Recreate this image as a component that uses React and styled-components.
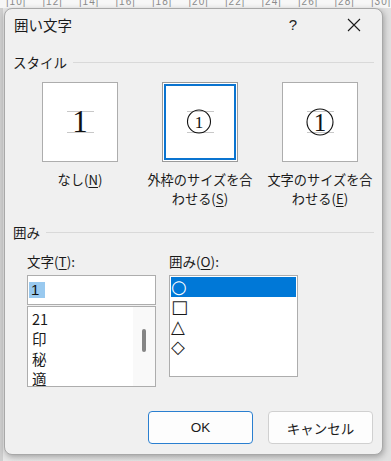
import React from 'react';
import styled, { createGlobalStyle } from 'styled-components';

const GlobalStyle = createGlobalStyle`
  html, body {
    margin: 0;
    padding: 0;
    background: #d4d4d4;
    font-family: "Noto Sans CJK JP", "Noto Sans", sans-serif;
  }
`;

const rulerMarks = ['10', '12', '14', '16', '18', '20', '22', '24', '26', '28', '30'];
const styleOptions = [
  { key: 'none', label: 'なし(', acc: 'N', tail: ')' },
  { key: 'shrink', label: '外枠のサイズを合わせる(', acc: 'S', tail: ')' },
  { key: 'enlarge', label: '文字のサイズを合わせる(', acc: 'E', tail: ')' },
];
const chars = ['21', '印', '秘', '適'];
const shapes = ['\u25CB', '\u25A1', '\u25B3', '\u25C7'];

const StylePreview = ({ variant }) => (
  <svg width="74" height="78" viewBox="0 0 74 78">
    <line x1="24" y1="28.5" x2="51" y2="28.5" stroke="#c8c8c8" strokeWidth="1" />
    <line x1="24" y1="49.5" x2="51" y2="49.5" stroke="#c8c8c8" strokeWidth="1" />
    {variant === 'none' && (
      <text x="37" y="49" textAnchor="middle" fontFamily="Liberation Serif, serif" fontSize="31" fill="#111">1</text>
    )}
    {variant === 'shrink' && (
      <>
        <circle cx="36" cy="38.5" r="11.5" fill="none" stroke="#111" strokeWidth="1.1" />
        <text x="36" y="44.5" textAnchor="middle" fontFamily="Liberation Serif, serif" fontSize="17" fill="#111">1</text>
      </>
    )}
    {variant === 'enlarge' && (
      <>
        <circle cx="37" cy="39" r="13" fill="none" stroke="#111" strokeWidth="1.1" />
        <text x="37" y="48" textAnchor="middle" fontFamily="Liberation Serif, serif" fontSize="25" fill="#111">1</text>
      </>
    )}
  </svg>
);

const CloseIcon = () => (
  <svg width="14" height="14" viewBox="0 0 14 14">
    <path d="M1 1 L13 13 M13 1 L1 13" stroke="#1a1a1a" strokeWidth="1.1" fill="none" />
  </svg>
);

export default function App() {
  return (
    <Page>
      <GlobalStyle />
      <Ruler>
        {rulerMarks.map((m) => (
          <RulerMark key={m}>|{m}|</RulerMark>
        ))}
      </Ruler>
      <Dialog>
        <TitleBar>
          <Title>囲い文字</Title>
          <HelpButton>?</HelpButton>
          <CloseButton>
            <CloseIcon />
          </CloseButton>
        </TitleBar>
        <Body>
          <GroupHeader>
            <span>スタイル</span>
          </GroupHeader>
          <StyleRow>
            {styleOptions.map((o) => (
              <StyleColumn key={o.key}>
                <PreviewBox selected={o.key === 'shrink'}>
                  <StylePreview variant={o.key} />
                </PreviewBox>
                <StyleLabel>
                  {o.label}
                  <u>{o.acc}</u>
                  {o.tail}
                </StyleLabel>
              </StyleColumn>
            ))}
          </StyleRow>
          <GroupHeader spaced>
            <span>囲み</span>
          </GroupHeader>
          <EncloseRow>
            <Field>
              <FieldLabel>
                文字(<u>T</u>):
              </FieldLabel>
              <TextInput>
                <Selected>1</Selected>
              </TextInput>
              <CharList>
                <CharItems>
                  {chars.map((c) => (
                    <ListRow key={c}>{c}</ListRow>
                  ))}
                </CharItems>
                <ScrollTrack>
                  <ScrollThumb />
                </ScrollTrack>
              </CharList>
            </Field>
            <Field>
              <FieldLabel>
                囲み(<u>O</u>):
              </FieldLabel>
              <ShapeList>
                {shapes.map((s, i) => (
                  <ShapeRow key={s} active={i === 0}>
                    {s}
                  </ShapeRow>
                ))}
              </ShapeList>
            </Field>
          </EncloseRow>
          <Footer>
            <Button primary>OK</Button>
            <Button>キャンセル</Button>
          </Footer>
        </Body>
      </Dialog>
    </Page>
  );
}

const Page = styled.div`
  width: 391px;
  height: 461px;
  overflow: hidden;
  background: linear-gradient(to right, #cfcfcf 0, #cfcfcf 3px, #e8e8e8 3px, #e0e0e0 100%);
`;

const Ruler = styled.div`
  height: 8px;
  overflow: hidden;
  background: #f7f7f7;
  display: flex;
  padding-left: 6px;
`;

const RulerMark = styled.span`
  flex: none;
  width: 36.5px;
  margin-top: -3px;
  font-family: "Liberation Sans", sans-serif;
  font-size: 10px;
  line-height: 10px;
  color: #8a8a8a;
  letter-spacing: 1px;
`;

const Dialog = styled.div`
  margin-left: 4px;
  width: 379px;
  height: 447px;
  box-sizing: border-box;
  background: #f0f0f0;
  border: 1px solid #a8a8a8;
  border-radius: 8px;
  box-shadow: 1px 2px 6px rgba(0, 0, 0, 0.3);
  display: flex;
  flex-direction: column;
  color: #1a1a1a;
`;

const TitleBar = styled.div`
  height: 31px;
  display: flex;
  align-items: center;
  padding-left: 9px;
`;

const Title = styled.div`
  flex: 1;
  font-size: 14.5px;
  line-height: 18px;
`;

const HelpButton = styled.div`
  width: 20px;
  text-align: center;
  font-family: "Liberation Sans", sans-serif;
  font-size: 15px;
  margin-right: 44px;
  color: #222;
`;

const CloseButton = styled.div`
  width: 14px;
  height: 14px;
  display: flex;
  margin-right: 21px;
`;

const Body = styled.div`
  flex: 1;
  display: flex;
  flex-direction: column;
  padding: 0 8px;
`;

const GroupHeader = styled.div`
  display: flex;
  align-items: center;
  gap: 6px;
  margin-top: ${({ spaced }) => (spaced ? '15px' : '13px')};
  font-size: 13.5px;
  line-height: 18px;

  &::after {
    content: '';
    flex: 1;
    height: 1px;
    background: #d9d9d9;
  }
`;

const StyleRow = styled.div`
  display: grid;
  grid-template-columns: repeat(3, 120px);
  margin: 11px 0 0 7px;
`;

const StyleColumn = styled.div`
  display: flex;
  flex-direction: column;
  align-items: center;
`;

const PreviewBox = styled.div`
  width: 76px;
  height: 80px;
  box-sizing: border-box;
  background: #fff;
  border: 1px solid ${({ selected }) => (selected ? '#9a9a9a' : '#adadad')};
  box-shadow: ${({ selected }) =>
    selected ? 'inset 0 0 0 1px #fff, inset 0 0 0 3px #0a74d0' : 'none'};
  display: flex;
`;

const StyleLabel = styled.div`
  width: 110px;
  margin-top: 8px;
  font-size: 13.2px;
  line-height: 19px;
  text-align: center;

  u {
    text-underline-offset: 2px;
  }
`;

const EncloseRow = styled.div`
  display: flex;
  gap: 13px;
  margin: 11px 0 0 14px;
`;

const Field = styled.div`
  width: 129px;
  display: flex;
  flex-direction: column;
`;

const FieldLabel = styled.div`
  font-size: 13.5px;
  line-height: 18px;
  margin-bottom: 5px;

  u {
    text-underline-offset: 2px;
  }
`;

const TextInput = styled.div`
  height: 30px;
  box-sizing: border-box;
  background: #fff;
  border: 1px solid #adadad;
  display: flex;
  align-items: center;
  padding-left: 1px;
`;

const Selected = styled.span`
  background: #99c9ef;
  font-family: "Liberation Sans", sans-serif;
  font-size: 15px;
  line-height: 16px;
  padding: 0 6px 0 2px;
  color: #111;
`;

const CharList = styled.div`
  height: 81px;
  box-sizing: border-box;
  margin-top: 1px;
  background: #fff;
  border: 1px solid #adadad;
  display: flex;
  overflow: hidden;
`;

const CharItems = styled.div`
  flex: 1;
  padding: 2px 0 0 4px;
`;

const ListRow = styled.div`
  height: 20px;
  font-size: 14.5px;
  line-height: 20px;
`;

const ScrollTrack = styled.div`
  width: 22px;
  background: #f9f9f9;
  position: relative;
`;

const ScrollThumb = styled.div`
  position: absolute;
  left: 9px;
  top: 22px;
  width: 4px;
  height: 23px;
  border-radius: 2px;
  background: #858585;
`;

const ShapeList = styled.div`
  height: 102px;
  box-sizing: border-box;
  background: #fff;
  border: 1px solid #adadad;
  padding: 1px;
`;

const ShapeRow = styled.div`
  height: 20px;
  display: flex;
  align-items: center;
  padding-left: 0;
  font-family: "DejaVu Sans", sans-serif;
  font-size: 18px;
  line-height: 20px;
  background: ${({ active }) => (active ? '#0078d7' : 'transparent')};
  color: ${({ active }) => (active ? '#ffffff' : '#1a1a1a')};
`;

const Footer = styled.div`
  margin-top: auto;
  margin-bottom: 10px;
  margin-right: 1px;
  display: flex;
  justify-content: flex-end;
  gap: 15px;
`;

const Button = styled.div`
  width: 105px;
  height: 33px;
  box-sizing: border-box;
  border-radius: 4px;
  background: #fdfdfd;
  border: 1px solid ${({ primary }) => (primary ? '#2a7fd0' : '#d0d0d0')};
  display: flex;
  align-items: center;
  justify-content: center;
  font-size: 13.5px;
  font-family: ${({ primary }) => (primary ? '"Liberation Sans", sans-serif' : 'inherit')};
  color: #1a1a1a;
`;
